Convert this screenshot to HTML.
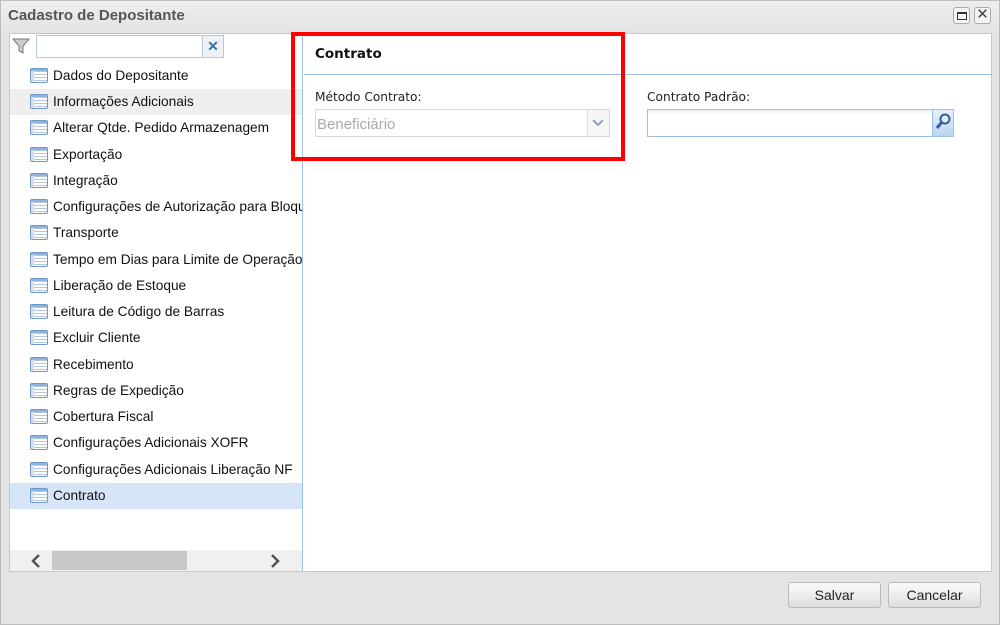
<!DOCTYPE html>
<html><head><meta charset="utf-8"><style>
*{box-sizing:border-box;margin:0;padding:0}
body{width:1000px;height:625px;background:#e4e4e4;font-family:"Liberation Sans",sans-serif;position:relative;overflow:hidden}
.win{position:absolute;left:0;top:0;width:1000px;height:625px;border:1px solid #bdbdbd;background:linear-gradient(#eee,#e4e4e4 30px)}
.title{position:absolute;left:7px;top:6px;font-weight:bold;font-size:15px;color:#555}
.tb{position:absolute;top:6px;width:17px;height:17px;border:1px solid #aaa;border-radius:3px;background:#f4f4f4}
.body{position:absolute;left:8px;top:32px;width:983px;height:539px;background:#fff;border:1px solid #c8c8c8}
.left{position:absolute;left:0;top:0;width:293px;height:537px;border-right:1px solid #9cc0e6}
.row{position:absolute;left:0;width:292px;height:26px;font-size:13.7px;color:#111;white-space:nowrap;overflow:hidden}
.row span{position:absolute;left:43px;top:5px}
.ic{position:absolute;left:20px;top:5px;width:18px;height:15px;border:1px solid #6f98c8;border-radius:2px;background:repeating-linear-gradient(#fff 0 2px,#b8c8dc 2px 3px);}
.ic:before{content:"";position:absolute;left:0;top:0;width:3px;height:13px;background:#cfe0f4}
.ic:after{content:"";position:absolute;left:0;right:0;top:0;height:2px;background:#8fb3dd}
.btn{position:absolute;top:581px;width:93px;height:26px;border:1px solid #bbb;border-radius:3px;background:linear-gradient(#fafafa,#eaeaea 60%,#dcdcdc);font-size:14px;text-align:center;line-height:24px;color:#222}
.lbl{position:absolute;font-family:"DejaVu Sans",sans-serif;font-size:12.2px;color:#222}
</style></head><body>
<div class="win">
<div class="title">Cadastro de Depositante</div>
<div class="tb" style="left:952px"><div style="position:absolute;left:3px;top:4px;width:10px;height:8px;border:1px solid #333;border-top-width:2px"></div></div>
<div class="tb" style="left:973px;font-size:15px;line-height:14px;text-align:center;color:#444">✕</div>
<div class="body">
<div class="left">
 <svg style="position:absolute;left:2px;top:4px" width="18" height="16" viewBox="0 0 18 16"><path d="M1 1h16l-6 7v7l-4-2V8z" fill="#ccc" stroke="#777"/></svg>
 <div style="position:absolute;left:26px;top:1px;width:188px;height:23px;border:1px solid #b5c8de;background:#fff"></div>
 <div style="position:absolute;left:192px;top:1px;width:22px;height:23px;border:1px solid #b5c8de;background:#eef2f6;color:#3a6fb0;font-weight:bold;text-align:center;line-height:21px;font-size:14px">✕</div>
 <div class="row" style="top:29px"><i class="ic"></i><span>Dados do Depositante</span></div>
 <div class="row" style="top:55px;background:#efefef"><i class="ic"></i><span>Informações Adicionais</span></div>
 <div class="row" style="top:81px"><i class="ic"></i><span>Alterar Qtde. Pedido Armazenagem</span></div>
 <div class="row" style="top:108px"><i class="ic"></i><span>Exportação</span></div>
 <div class="row" style="top:134px"><i class="ic"></i><span>Integração</span></div>
 <div class="row" style="top:160px"><i class="ic"></i><span>Configurações de Autorização para Bloqueio</span></div>
 <div class="row" style="top:186px"><i class="ic"></i><span>Transporte</span></div>
 <div class="row" style="top:213px"><i class="ic"></i><span>Tempo em Dias para Limite de Operação</span></div>
 <div class="row" style="top:239px"><i class="ic"></i><span>Liberação de Estoque</span></div>
 <div class="row" style="top:265px"><i class="ic"></i><span>Leitura de Código de Barras</span></div>
 <div class="row" style="top:291px"><i class="ic"></i><span>Excluir Cliente</span></div>
 <div class="row" style="top:318px"><i class="ic"></i><span>Recebimento</span></div>
 <div class="row" style="top:344px"><i class="ic"></i><span>Regras de Expedição</span></div>
 <div class="row" style="top:370px"><i class="ic"></i><span>Cobertura Fiscal</span></div>
 <div class="row" style="top:396px"><i class="ic"></i><span>Configurações Adicionais XOFR</span></div>
 <div class="row" style="top:423px"><i class="ic"></i><span>Configurações Adicionais Liberação NF</span></div>
 <div class="row" style="top:449px;background:#d6e6f8"><i class="ic"></i><span>Contrato</span></div>
 <div style="position:absolute;left:0;top:516px;width:292px;height:21px;background:#f0f0f0"></div>
 <div style="position:absolute;left:42px;top:517px;width:135px;height:19px;background:#c8c8c8"></div>
 <svg style="position:absolute;left:20px;top:520px" width="12" height="14"><path d="M9 1L3 7l6 6" fill="none" stroke="#555" stroke-width="2.5"/></svg>
 <svg style="position:absolute;left:259px;top:520px" width="12" height="14"><path d="M3 1l6 6-6 6" fill="none" stroke="#555" stroke-width="2.5"/></svg>
</div>
<div style="position:absolute;left:294px;top:40px;width:688px;height:1px;background:#9cc0e6"></div>
<div class="lbl" style="left:305px;top:12px;font-weight:bold;font-size:13.5px;color:#111">Contrato</div>
<div class="lbl" style="left:305px;top:56px">Método Contrato:</div>
<div style="position:absolute;left:305px;top:75px;width:295px;height:28px;border:1px solid #d8d8d8;background:#fff"></div>
<div class="lbl" style="left:307px;top:82px;color:#aaa;font-family:'Liberation Sans',sans-serif;font-size:15px">Beneficiário</div>
<div style="position:absolute;left:577px;top:76px;width:22px;height:26px;border-left:1px solid #ddd;background:#f6f6f6"></div>
<svg style="position:absolute;left:582px;top:85px" width="12" height="8"><path d="M1 1l5 5 5-5" fill="none" stroke="#8fa4bf" stroke-width="2"/></svg>
<div class="lbl" style="left:637px;top:56px">Contrato Padrão:</div>
<div style="position:absolute;left:637px;top:75px;width:286px;height:28px;border:1px solid #9cc0e6;background:linear-gradient(#f0f0f0,#fff 5px)"></div>
<div style="position:absolute;left:922px;top:75px;width:22px;height:28px;border:1px solid #9cc0e6;background:linear-gradient(#e6f0fa,#bcd4ee)"></div>
<svg style="position:absolute;left:924px;top:78px" width="18" height="20"><circle cx="11" cy="7" r="4.5" fill="#dfeeff" stroke="#2f5f9e" stroke-width="2"/><path d="M8 10l-5 6" stroke="#2f5f9e" stroke-width="3"/></svg>
</div>
<div style="position:absolute;left:290px;top:31px;width:334px;height:129px;border:4px solid #f00"></div>
<div class="btn" style="left:787px">Salvar</div>
<div class="btn" style="left:887px">Cancelar</div>
</div>
</body></html>
